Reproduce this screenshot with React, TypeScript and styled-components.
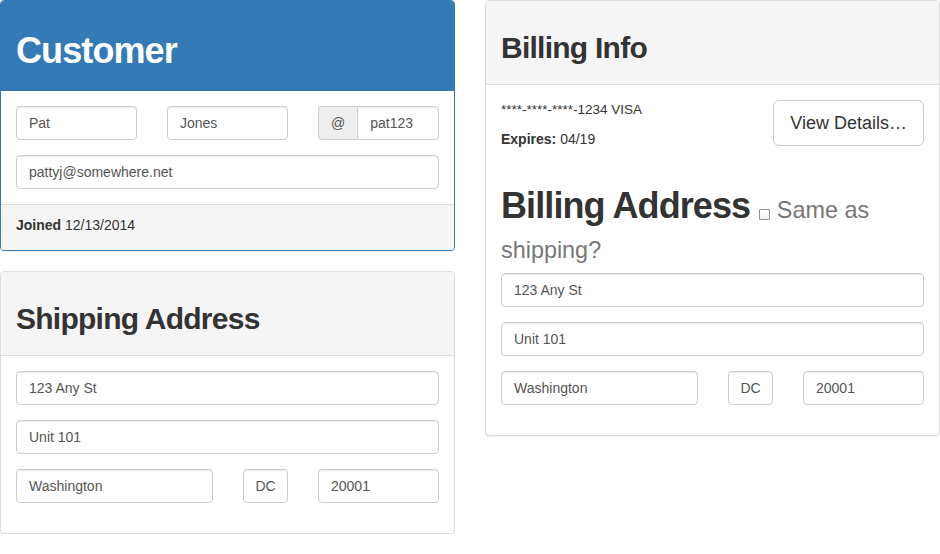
import React from "react";
import styled, { createGlobalStyle, css } from "styled-components";

const GlobalStyle = createGlobalStyle`
  html, body {
    margin: 0;
    padding: 0;
    background: #ffffff;
  }
  body {
    font-family: "Liberation Sans", Arial, Helvetica, sans-serif;
    font-size: 14px;
    line-height: 1.42857143;
    color: #333333;
  }
  *, *::before, *::after { box-sizing: border-box; }
`;

const Page = styled.div`
  display: grid;
  grid-template-columns: 455px 455px;
  column-gap: 30px;
  align-items: start;
  width: 940px;
`;

const Column = styled.div`
  display: flex;
  flex-direction: column;
  gap: 20px;
`;

const Panel = styled.section<{ $primary?: boolean }>`
  background: #ffffff;
  border: 1px solid ${(p) => (p.$primary ? "#337ab7" : "#dddddd")};
  border-radius: 4px;
  box-shadow: 0 1px 1px rgba(0, 0, 0, 0.05);
  overflow: hidden;
`;

const PanelHeading = styled.header<{ $primary?: boolean }>`
  padding: 10px 15px;
  ${(p) =>
    p.$primary
      ? css`
          background: #337ab7;
          color: #ffffff;
          border-bottom: 1px solid #337ab7;
        `
      : css`
          background: #f5f5f5;
          color: #333333;
          border-bottom: 1px solid #dddddd;
        `}
`;

const Title = styled.h1<{ $size: number; $line: number }>`
  margin: 20px 0 10px;
  font-size: ${(p) => p.$size}px;
  font-weight: 700;
  line-height: ${(p) => p.$line}px;
  letter-spacing: -0.025em;
`;

const PanelBody = styled.div<{ $tight?: boolean }>`
  padding: 15px 15px ${(p) => (p.$tight ? "0" : "15px")};
`;

const PanelFooter = styled.footer`
  padding: 10px 15px 15px;
  background: #f5f5f5;
  border-top: 1px solid #dddddd;
`;

const FooterLabel = styled.span`
  font-weight: 700;
`;

const Row = styled.div`
  display: flex;
  margin: 0 -15px 15px;
`;

const Col = styled.div<{ $span: number }>`
  width: ${(p) => (p.$span / 12) * 100}%;
  padding: 0 15px;
`;

const Field = styled.input`
  display: block;
  width: 100%;
  height: 34px;
  padding: 6px 12px;
  font-family: inherit;
  font-size: 14px;
  line-height: 1.42857143;
  color: #555555;
  background: #ffffff;
  border: 1px solid #cccccc;
  border-radius: 4px;
  box-shadow: inset 0 1px 1px rgba(0, 0, 0, 0.075);
  outline: none;
`;

const InputGroup = styled.div`
  display: flex;
  width: 100%;

  ${Field} {
    flex: 1;
    min-width: 0;
    border-top-left-radius: 0;
    border-bottom-left-radius: 0;
  }
`;

const Addon = styled.span`
  display: flex;
  align-items: center;
  padding: 6px 12px;
  font-size: 14px;
  line-height: 1;
  color: #555555;
  background: #eeeeee;
  border: 1px solid #cccccc;
  border-right: 0;
  border-radius: 4px 0 0 4px;
`;

const CardRow = styled.div`
  display: flex;
  justify-content: space-between;
  align-items: flex-start;
`;

const CardText = styled.p`
  margin: 0 0 10px;
`;

const CardNumber = styled(CardText)`
  font-size: 13.5px;
`;

const Strong = styled.strong`
  font-weight: 700;
`;

const Button = styled.button`
  padding: 10px 16px;
  font-family: inherit;
  font-size: 18px;
  line-height: 1.3333333;
  color: #333333;
  background: #ffffff;
  border: 1px solid #cccccc;
  border-radius: 6px;
  cursor: pointer;
`;

const SectionTitle = styled.h1`
  margin: 27px 0 8px;
  font-size: 36px;
  font-weight: 700;
  line-height: 1.1;
  letter-spacing: -0.025em;
`;

const Small = styled.label`
  font-size: 65%;
  font-weight: 400;
  line-height: 1;
  color: #777777;
  letter-spacing: 0;
`;

const Check = styled.input`
  appearance: none;
  -webkit-appearance: none;
  display: inline-block;
  width: 11px;
  height: 11px;
  margin: 0;
  vertical-align: -2px;
  background: linear-gradient(#ffffff, #f4f4f4);
  border: 1px solid #8e8e8e;
  border-radius: 1px;
`;

function AddressFields() {
  return (
    <>
      <Row>
        <Col $span={12}>
          <Field defaultValue="123 Any St" />
        </Col>
      </Row>
      <Row>
        <Col $span={12}>
          <Field defaultValue="Unit 101" />
        </Col>
      </Row>
      <Row>
        <Col $span={6}>
          <Field defaultValue="Washington" />
        </Col>
        <Col $span={2}>
          <Field defaultValue="DC" />
        </Col>
        <Col $span={4}>
          <Field defaultValue="20001" />
        </Col>
      </Row>
    </>
  );
}

export default function App() {
  return (
    <>
      <GlobalStyle />
      <Page>
        <Column>
          <Panel $primary>
            <PanelHeading $primary>
              <Title $size={36} $line={39}>
                Customer
              </Title>
            </PanelHeading>
            <PanelBody $tight>
              <Row>
                <Col $span={4}>
                  <Field defaultValue="Pat" />
                </Col>
                <Col $span={4}>
                  <Field defaultValue="Jones" />
                </Col>
                <Col $span={4}>
                  <InputGroup>
                    <Addon>@</Addon>
                    <Field defaultValue="pat123" />
                  </InputGroup>
                </Col>
              </Row>
              <Row>
                <Col $span={12}>
                  <Field defaultValue="pattyj@somewhere.net" />
                </Col>
              </Row>
            </PanelBody>
            <PanelFooter>
              <FooterLabel>Joined</FooterLabel> 12/13/2014
            </PanelFooter>
          </Panel>

          <Panel>
            <PanelHeading>
              <Title as="h2" $size={30} $line={33}>
                Shipping Address
              </Title>
            </PanelHeading>
            <PanelBody>
              <AddressFields />
            </PanelBody>
          </Panel>
        </Column>

        <Column>
          <Panel>
            <PanelHeading>
              <Title as="h2" $size={30} $line={33}>
                Billing Info
              </Title>
            </PanelHeading>
            <PanelBody>
              <CardRow>
                <div>
                  <CardNumber>****-****-****-1234 VISA</CardNumber>
                  <CardText>
                    <Strong>Expires:</Strong> 04/19
                  </CardText>
                </div>
                <Button type="button">View Details…</Button>
              </CardRow>
              <SectionTitle>
                Billing Address{" "}
                <Small>
                  <Check type="checkbox" /> Same as shipping?
                </Small>
              </SectionTitle>
              <AddressFields />
            </PanelBody>
          </Panel>
        </Column>
      </Page>
    </>
  );
}
